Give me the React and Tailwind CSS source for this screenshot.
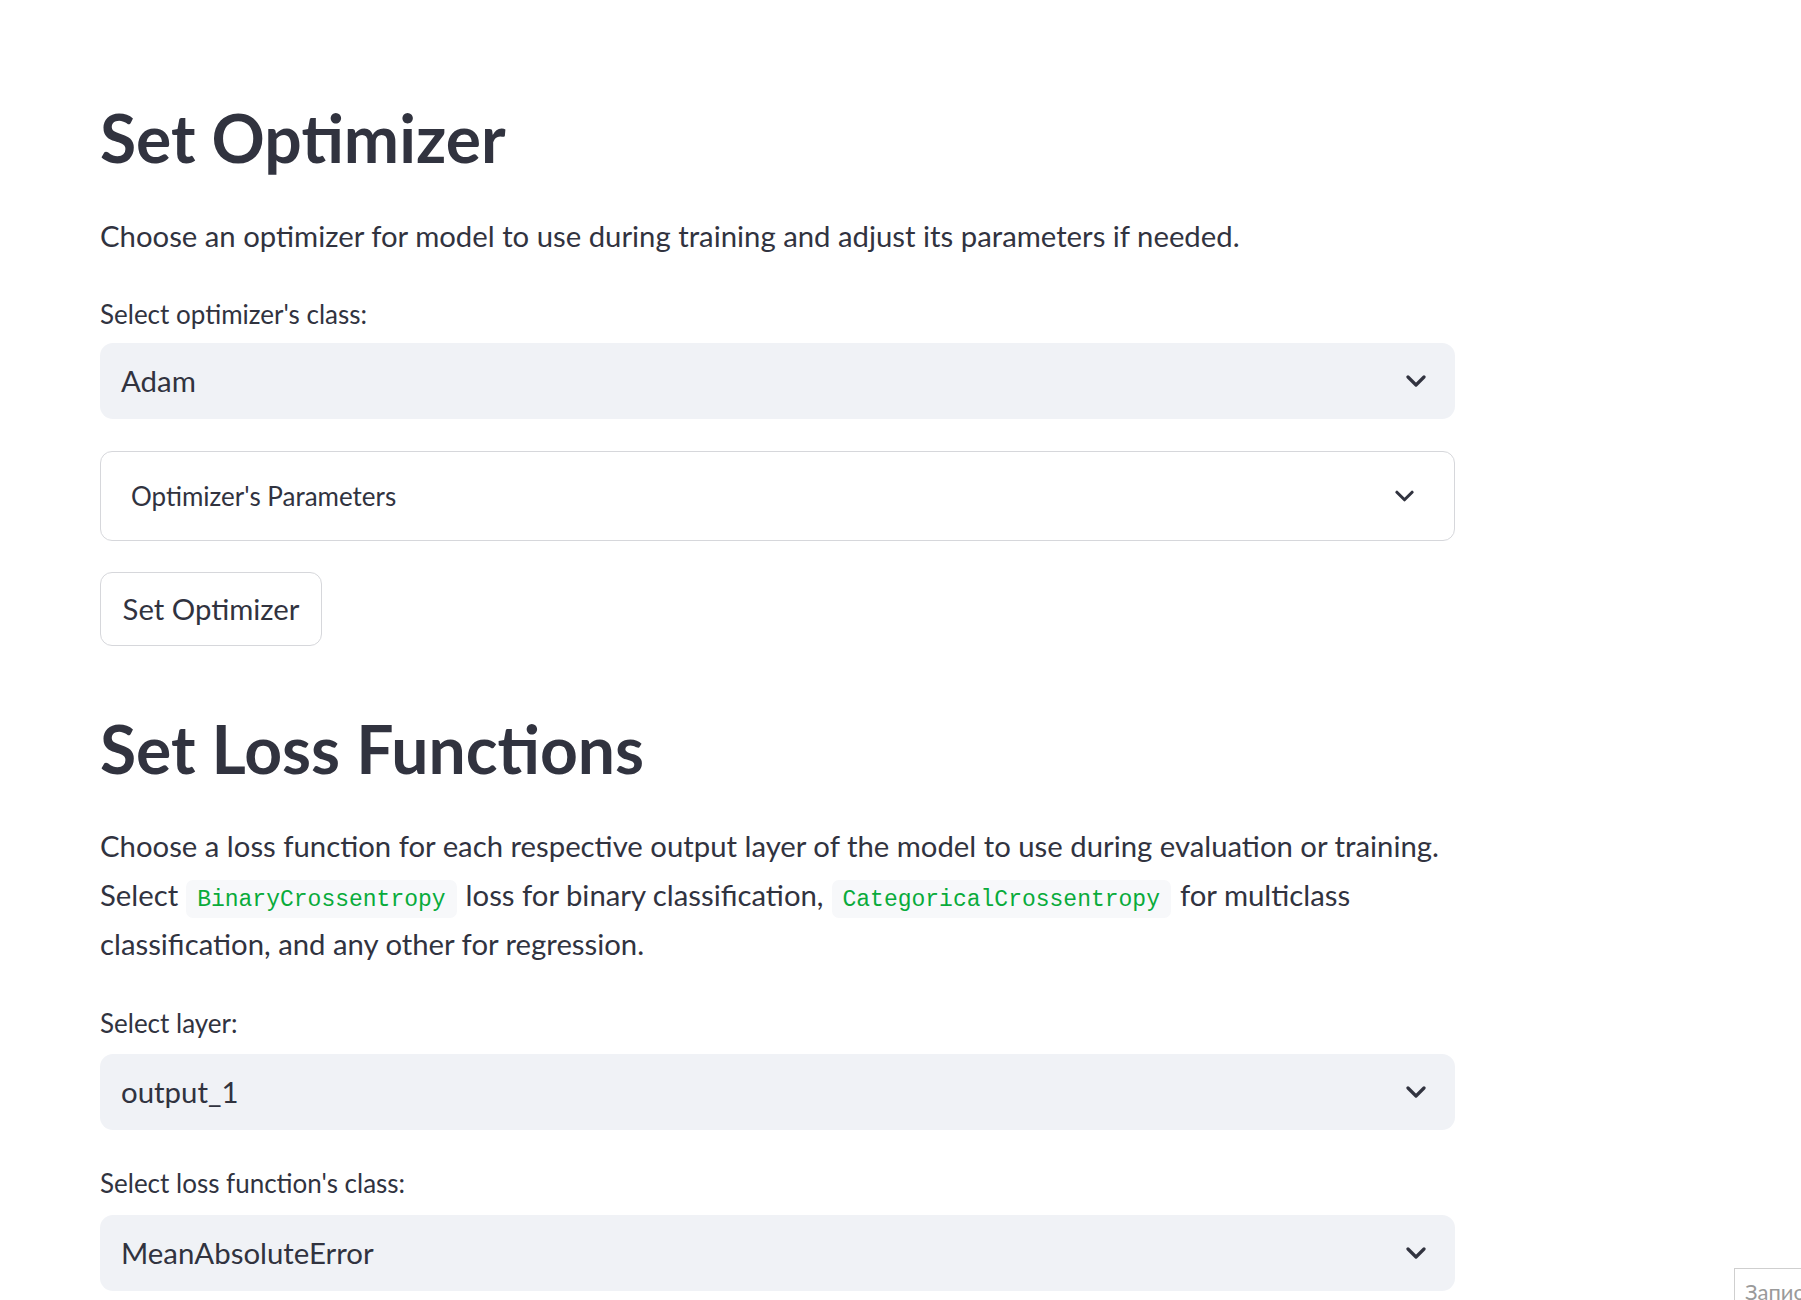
import React from 'react';

const sans = { fontFamily: 'Lato, "Noto Sans", sans-serif' };

function Chevron({ className }) {
  return (
    <svg className={className} viewBox="0 0 20 12" fill="none">
      <polyline
        points="2,2 10,10 18,2"
        stroke="#31333F"
        strokeWidth="3.2"
        strokeLinecap="round"
        strokeLinejoin="round"
      />
    </svg>
  );
}

function SelectBox({ value }) {
  return (
    <div className="flex items-center justify-between h-[76px] rounded-[13px] bg-[#f0f2f6] pl-[21px] pr-[29px]">
      <span className="text-[29.4px] leading-none text-[#31333F]">{value}</span>
      <Chevron className="w-[20px] h-[12px]" />
    </div>
  );
}

function Code({ children }) {
  return (
    <code className="inline-block align-baseline ml-[8px] mr-[9px] px-[11px] pt-[3px] rounded-[7px] bg-[#f7f8fa] text-[23px] leading-[35px] text-[#09ab3b] font-['Liberation_Mono',monospace]">
      {children}
    </code>
  );
}

export default function App() {
  return (
    <div className="min-h-[1300px] bg-white text-[#31333F]" style={sans}>
      <div className="w-[1355px] ml-[100px] pt-[96px] flex flex-col">
        <h1 className="text-[66px] leading-[84px] font-bold">Set Optimizer</h1>
        <p className="mt-[34px] text-[29.3px] leading-[44px]">
          Choose an optimizer for model to use during training and adjust its parameters if needed.
        </p>

        <label className="mt-[40px] text-[26px] leading-[32px]">Select optimizer's class:</label>
        <div className="mt-[13px]">
          <SelectBox value="Adam" />
        </div>

        <div className="mt-[32px] flex items-center justify-between h-[90px] rounded-[12px] border border-[#d6d7db] pl-[30px] pr-[40px]">
          <span className="text-[26px] leading-none">Optimizer's Parameters</span>
          <Chevron className="w-[19px] h-[12px]" />
        </div>

        <div className="mt-[31px]">
          <button className="w-[222px] h-[74px] rounded-[12px] border border-[#d6d7db] bg-white text-[29.3px] leading-none text-[#31333F]">
            Set Optimizer
          </button>
        </div>

        <h2 className="mt-[61px] text-[66px] leading-[84px] font-bold">Set Loss Functions</h2>
        <p className="mt-[30px] text-[29.3px] leading-[49px] whitespace-nowrap">
          Choose a loss function for each respective output layer of the model to use during evaluation or training.
          <br />
          Select<Code>BinaryCrossentropy</Code>loss for binary classification,<Code>CategoricalCrossentropy</Code>for multiclass
          <br />
          classification, and any other for regression.
        </p>

        <label className="mt-[39px] text-[26px] leading-[32px]">Select layer:</label>
        <div className="mt-[15px]">
          <SelectBox value="output_1" />
        </div>

        <label className="mt-[37px] text-[26px] leading-[32px]">Select loss function's class:</label>
        <div className="mt-[16px]">
          <SelectBox value="MeanAbsoluteError" />
        </div>
      </div>

      <div className="fixed left-[1734px] top-[1268px] w-[120px] h-[60px] border border-[#cfcfcf] bg-white pl-[10px] pt-[12px] overflow-hidden">
        <span className="text-[22px] leading-none text-[#9a9a9a] whitespace-nowrap">Записать</span>
      </div>
    </div>
  );
}
